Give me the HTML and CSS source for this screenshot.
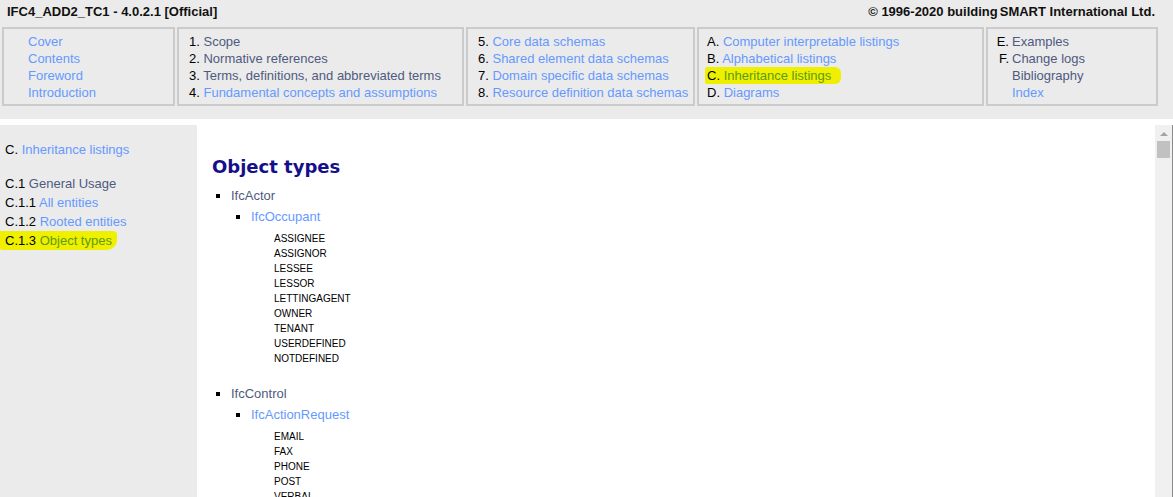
FILE: index.html
```html
<!DOCTYPE html>
<html>
<head>
<meta charset="utf-8">
<title>IFC4_ADD2_TC1 - Object types</title>
<link rel="stylesheet" href="styles.css">
</head>
<body>
<div class="top">
  <div class="header">
    <span class="title">IFC4_ADD2_TC1 - 4.0.2.1 [Official]</span>
    <span class="copy">© 1996-2020 building<span class="sm">SMART</span> International Ltd.</span>
  </div>
  <div class="nav">
    <div class="box b1">
      <div class="row"><span class="num"></span><a class="lk">Cover</a></div>
      <div class="row"><span class="num"></span><a class="lk">Contents</a></div>
      <div class="row"><span class="num"></span><a class="lk">Foreword</a></div>
      <div class="row"><span class="num"></span><a class="lk">Introduction</a></div>
    </div>
    <div class="box b2">
      <div class="row">1. <a class="vis">Scope</a></div>
      <div class="row">2. <a class="vis">Normative references</a></div>
      <div class="row">3. <a class="vis">Terms, definitions, and abbreviated terms</a></div>
      <div class="row">4. <a class="lk">Fundamental concepts and assumptions</a></div>
    </div>
    <div class="box b3">
      <div class="row">5. <a class="lk">Core data schemas</a></div>
      <div class="row">6. <a class="lk">Shared element data schemas</a></div>
      <div class="row">7. <a class="lk">Domain specific data schemas</a></div>
      <div class="row">8. <a class="lk">Resource definition data schemas</a></div>
    </div>
    <div class="box b4">
      <div class="row">A. <a class="lk">Computer interpretable listings</a></div>
      <div class="row">B. <a class="lk">Alphabetical listings</a></div>
      <div class="row"><span class="mark">C. <a class="lk">Inheritance listings</a></span></div>
      <div class="row">D. <a class="lk">Diagrams</a></div>
    </div>
    <div class="box b5">
      <div class="row"><span class="num2">E.</span><a class="vis">Examples</a></div>
      <div class="row"><span class="num2">F.</span><a class="vis">Change logs</a></div>
      <div class="row"><span class="num2"></span><a class="vis">Bibliography</a></div>
      <div class="row"><span class="num2"></span><a class="lk">Index</a></div>
    </div>
  </div>
</div>
<div class="frames">
  <div class="side">
    <div class="srow head">C. <a class="lk">Inheritance listings</a></div>
    <div class="srow">C.1 <a class="vis">General Usage</a></div>
    <div class="srow">C.1.1 <a class="lk">All entities</a></div>
    <div class="srow">C.1.2 <a class="lk">Rooted entities</a></div>
    <div class="srow"><span class="mark smark">C.1.3 <a class="lk">Object types</a></span></div>
  </div>
  <div class="main">
    <div class="content">
      <h2 class="h">Object types</h2>
      <ul class="l1">
        <li><a class="vis">IfcActor</a>
          <ul class="l2">
            <li><a class="lk">IfcOccupant</a>
              <ul class="enum">
                <li>ASSIGNEE</li>
                <li>ASSIGNOR</li>
                <li>LESSEE</li>
                <li>LESSOR</li>
                <li>LETTINGAGENT</li>
                <li>OWNER</li>
                <li>TENANT</li>
                <li>USERDEFINED</li>
                <li>NOTDEFINED</li>
              </ul>
            </li>
          </ul>
        </li>
        <li><a class="vis">IfcControl</a>
          <ul class="l2">
            <li><a class="lk">IfcActionRequest</a>
              <ul class="enum">
                <li>EMAIL</li>
                <li>FAX</li>
                <li>PHONE</li>
                <li>POST</li>
                <li>VERBAL</li>
                <li>USERDEFINED</li>
                <li>NOTDEFINED</li>
              </ul>
            </li>
          </ul>
        </li>
      </ul>
    </div>
    <div class="scroll">
      <div class="arrow"></div>
      <div class="thumb"></div>
    </div>
  </div>
</div>
</body>
</html>
```

FILE: styles.css
```css
html, body {
  margin: 0;
  padding: 0;
  height: 100%;
  overflow: hidden;
}
body {
  background: #ebebeb;
  font-family: "Liberation Sans", Arial, sans-serif;
  color: #000;
  display: flex;
  flex-direction: column;
}
a { text-decoration: none; cursor: pointer; }
.lk { color: #6699ff; }
.vis { color: #4f5a80; }

.top {
  background: #ebebeb;
  height: 119px;
  border-bottom: 6px solid #ffffff;
  flex: none;
}
.header {
  display: flex;
  justify-content: space-between;
  padding: 3px 18px 0 7px;
  height: 24px;
  box-sizing: border-box;
  height: 27px;
  font-size: 13px;
  font-weight: bold;
  line-height: 17px;
  color: #111;
}
.sm { margin-left: 2px; }

.nav {
  display: flex;
  gap: 2px;
  margin-left: 2px;
  font-size: 13px;
  line-height: 17px;
}
.box {
  border: 2px solid #cbcbcb;
  padding: 4px 0 0 0;
  box-sizing: border-box;
  height: 79px;
}
.b1 { width: 173px; padding-left: 0; }
.b2 { width: 287px; padding-left: 10px; }
.b3 { width: 229px; padding-left: 10px; }
.b4 { width: 287px; padding-left: 8px; }
.b5 { width: 172px; padding-left: 0; }
.row { white-space: nowrap; }
.num { display: inline-block; width: 24px; }
.num2 { display: inline-block; width: 21px; text-align: right; padding-right: 3px; }
.mark {
  background: #eef000;
  padding: 1px 10px 1px 2px;
  margin-left: -2px;
  border-radius: 2px 6px 6px 2px;
}
.mark .lk { color: #5e9a12; }

.frames {
  flex: 1;
  display: flex;
  min-height: 0;
}
.side {
  width: 197px;
  flex: none;
  background: #ebebeb;
  padding: 15px 0 0 5px;
  box-sizing: border-box;
  font-size: 13px;
  line-height: 19px;
}
.srow { white-space: nowrap; }
.srow.head { margin-bottom: 15px; }
.smark {
  display: inline-block;
  margin-left: -5px;
  padding: 0 5px 0 5px;
  line-height: 19px;
  border-radius: 0 4px 10px 2px;
}

.main {
  flex: 1;
  display: flex;
  background: #fff;
  border-right: 1px solid #8a8a8a;
  min-width: 0;
}
.content {
  flex: 1;
  padding-left: 15px;
  overflow: hidden;
}
.h {
  font-family: "DejaVu Sans", Verdana, sans-serif;
  font-size: 18px;
  line-height: 24px;
  font-weight: bold;
  color: #14108a;
  margin: 30px 0 6px 0;
}
.l1 {
  list-style: square;
  margin: 0;
  padding-left: 19px;
  font-size: 13px;
  line-height: 21px;
}
.l2 {
  list-style: square;
  margin: 0;
  padding-left: 20px;
}
.enum {
  list-style: none;
  margin: 4px 0 17px 0;
  padding-left: 23px;
  font-size: 10px;
  line-height: 15px;
  color: #000;
}
.scroll {
  width: 17px;
  flex: none;
  background: #f0f0f0;
  display: flex;
  flex-direction: column;
  align-items: center;
  padding-top: 16px;
  box-sizing: border-box;
}
.arrow {
  width: 0;
  height: 0;
  border-left: 4px solid transparent;
  border-right: 4px solid transparent;
  border-bottom: 4px solid #a3a3a3;
  margin-top: -9px;
}
.thumb {
  width: 13px;
  height: 17px;
  background: #c1c1c1;
  margin-top: 5px;
}
```
